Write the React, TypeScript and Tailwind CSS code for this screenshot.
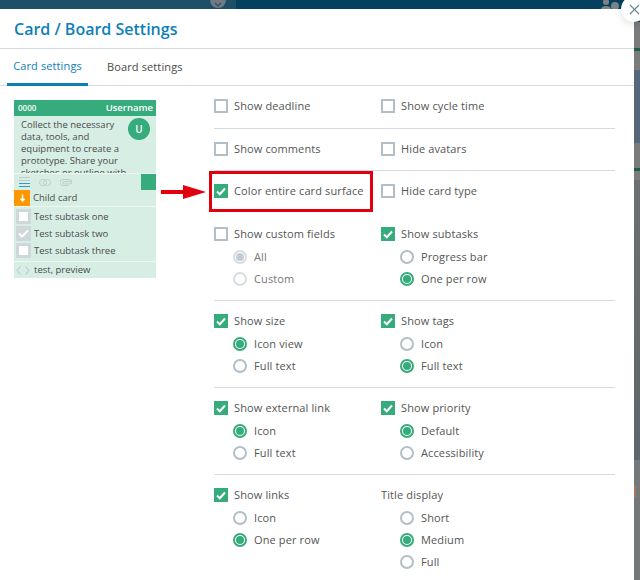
import React from "react";
import { X } from "lucide-react";

function Check({ on }: { on?: boolean }) {
  return on ? (
    <span className="flex h-[14px] w-[14px] shrink-0 items-center justify-center bg-[#36ab7b]">
      <svg width="10" height="9" viewBox="0 0 10 9" fill="none">
        <path d="M1 4.5 L3.8 7.2 L9 1.5" stroke="#fff" strokeWidth="2" />
      </svg>
    </span>
  ) : (
    <span className="h-[14px] w-[14px] shrink-0 border-2 border-[#b2bfc8] bg-white" />
  );
}

function CheckRow({ label, on }: { label: string; on?: boolean }) {
  return (
    <div className="flex h-4 items-center gap-[6px]">
      <Check on={on} />
      <span>{label}</span>
    </div>
  );
}

function Radio({ label, on, dim }: { label: string; on?: boolean; dim?: boolean }) {
  const ring = on ? "border-[#36ab7b]" : dim ? "border-[#d5dde2]" : "border-[#b2bfc8]";
  return (
    <div className={`flex h-4 items-center gap-[7px] pl-[19px] ${dim ? "text-[#777]" : ""}`}>
      <span className={`flex h-[14px] w-[14px] shrink-0 items-center justify-center rounded-full border-2 bg-white ${ring}`}>
        {on && <span className="h-2 w-2 rounded-full bg-[#36ab7b]" />}
      </span>
      <span>{label}</span>
    </div>
  );
}

function DimSelected({ label }: { label: string }) {
  return (
    <div className="flex h-4 items-center gap-[7px] pl-[19px] text-[#777]">
      <span className="flex h-[14px] w-[14px] shrink-0 items-center justify-center rounded-full border-2 border-[#d5dde2] bg-white">
        <span className="h-2 w-2 rounded-full bg-[#c3ccd2]" />
      </span>
      <span>{label}</span>
    </div>
  );
}

function Section({ children, line = true, tall = false }: { children: React.ReactNode; line?: boolean; tall?: boolean }) {
  return (
    <div className={`grid grid-cols-[167px_1fr] border-b pt-3 ${tall ? "pb-[14px]" : "pb-[13px]"} ${line ? "border-[#d3dbe1]" : "border-transparent"}`}>
      {children}
    </div>
  );
}

function Subs({ children }: { children: React.ReactNode }) {
  return <div className="mt-[7px] flex flex-col gap-[6px]">{children}</div>;
}

function Subtask({ label, on }: { label: string; on?: boolean }) {
  return (
    <div className="flex h-[17px] items-center gap-[3px] pl-[2px]">
      <span className={`flex h-[15px] w-[15px] items-center justify-center border-[3px] ${on ? "border-[#ced7da] bg-[#ced7da]" : "border-[#ced7da] bg-white"}`}>
        {on && (
          <svg width="11" height="9" viewBox="0 0 11 9" fill="none" className="shrink-0">
            <path d="M1 4.5 L4 7.5 L10 1.5" stroke="#fff" strokeWidth="2" />
          </svg>
        )}
      </span>
      <span>{label}</span>
    </div>
  );
}

function Card() {
  return (
    <div className="flex h-[178px] w-[142px] flex-col bg-[#d7eee5] text-[9.5px] leading-[12px] tracking-normal text-[#4a4a4a]">
      <div className="flex h-4 items-center justify-between bg-[#36ab7b] pl-1 pr-[3px] font-semibold text-white">
        <span className="text-[8px]">0000</span>
        <span className="text-[9.5px]">Username</span>
      </div>
      <div className="h-[57px] overflow-hidden pl-[7px] pr-[6px] pt-[3px]">
        <span className="float-right ml-[6px] mt-[-1px] flex h-[22px] w-[22px] items-center justify-center rounded-full bg-[#36ab7b] text-[10px] font-semibold text-white">U</span>
        Collect the necessary data, tools, and equipment to create a prototype. Share your sketches or outline with
      </div>
      <div className="flex h-[17px] items-center border-t border-[#eef7f3] pl-[5px]">
        <span className="flex w-[11px] flex-col gap-[2px]">
          <span className="h-px bg-[#c2ccd0]" />
          <span className="h-px bg-[#c2ccd0]" />
          <span className="h-px bg-[#2f9bd1]" />
          <span className="h-px bg-[#2f9bd1]" />
        </span>
        <svg className="ml-[9px]" width="12" height="7" viewBox="0 0 12 7" fill="none" stroke="#bfcdcd" strokeWidth="1">
          <rect x="0.5" y="0.5" width="7" height="6" rx="3" />
          <rect x="4.5" y="0.5" width="7" height="6" rx="3" />
        </svg>
        <svg className="ml-[9px]" width="12" height="7" viewBox="0 0 12 7" fill="none" stroke="#bfcdcd" strokeWidth="1">
          <path d="M11.5 2.5 H4 a1.2 1.2 0 0 0 0 2.5 H9.5 a1.9 1.9 0 0 0 0-4.5 H3 a2.6 2.6 0 0 0 0 6 H8" />
        </svg>
        <span className="ml-auto h-4 w-[15px] bg-[#36ab7b]" />
      </div>
      <div className="flex h-[17px] items-start gap-[3px] border-b border-[#eef7f3]">
        <span className="flex h-4 w-4 items-center justify-center bg-[#ff9800]">
          <svg width="7" height="8" viewBox="0 0 7 8" fill="none">
            <path d="M3.5 0.5 V6 M1.5 4.8 L3.5 7 L5.5 4.8" stroke="#fff" strokeWidth="1.5" />
          </svg>
        </span>
        <span className="leading-[15px]">Child card</span>
      </div>
      <div className="flex flex-col pt-[1px]">
        <Subtask label="Test subtask one" />
        <Subtask label="Test subtask two" on />
        <Subtask label="Test subtask three" />
      </div>
      <div className="mt-[2px] flex h-[17px] items-center gap-[3px] border-t border-[#eef7f3] pl-[2px]">
        <svg width="14" height="9" viewBox="0 0 14 9" fill="none" stroke="#b5c2c6" strokeWidth="1">
          <path d="M4.5 0.5 L1 4.5 L4.5 8.5 M9.5 0.5 L13 4.5 L9.5 8.5" />
        </svg>
        <span className="ml-[1px]">test, preview</span>
      </div>
    </div>
  );
}

function BackdropStrip() {
  return (
    <div className="flex flex-1 flex-col bg-[#75787a]">
      <div className="h-[13px] shrink-0 bg-[#06405f]" />
      <div className="h-[26px] shrink-0 bg-[#7a7b7b]" />
      <div className="h-[3px] shrink-0 bg-[#1f5f45]" />
      <div className="h-[19px] shrink-0 bg-[#7a7b7b]" />
      <div className="h-[73px] shrink-0 bg-[#55677a]" />
      <div className="h-[25px] shrink-0 bg-[#7a7b7b]" />
      <div className="h-[3px] shrink-0 bg-[#1f5f45]" />
      <div className="h-[9px] shrink-0 bg-[#7a7b7b]" />
      <div className="h-[280px] shrink-0 bg-gradient-to-b from-[#6b7072] to-[#5f666b]" />
      <div className="h-[25px] shrink-0 bg-[#75787a]" />
      <div className="h-[12px] w-[2px] shrink-0 bg-[#a8765a]" />
    </div>
  );
}

export default function App() {
  return (
    <div className="relative h-[580px] w-[640px] overflow-hidden bg-[#6c7476] font-['Open_Sans',sans-serif] text-[11px] tracking-[0.12px] text-[#555]">
      <div className="relative flex h-[9px] bg-[#06405f]">
        <div className="h-[9px] w-[236px] bg-[#1d4f66]" />
        <span className="absolute left-[210px] top-[-8px] flex h-4 w-4 items-end justify-center rounded-full bg-[#6e7b84]">
          <svg width="8" height="5" viewBox="0 0 8 5" fill="none" className="mb-[1px]">
            <path d="M1 1 L4 4 L7 1" stroke="#3d4a55" strokeWidth="1.2" />
          </svg>
        </span>
        <svg className="absolute left-[600px] top-0" width="20" height="9" viewBox="0 0 20 9">
          <circle cx="6" cy="2" r="3" fill="#7c8386" />
          <path d="M1 9 C1 5 11 5 11 9 Z" fill="#7c8386" />
          <circle cx="15" cy="6" r="4" fill="#7c8386" />
        </svg>
      </div>
      <div className="flex h-[571px]">
        <div className="flex w-[634px] flex-col bg-white">
          <div className="flex h-[40px] items-center border-b border-[#d3dbe1] pl-[14px] text-[16px] font-semibold tracking-normal text-[#0e7fb8]">
            Card / Board Settings
          </div>
          <div className="flex h-[37px] gap-[19px] border-b border-[#d3dbe1] pl-[7px]">
            <div className="-mb-px flex w-[81px] items-center justify-center border-b-[3px] border-[#0e7fb8] text-[#0e7fb8]">Card settings</div>
            <div className="flex items-center text-[#4a4a4a]">Board settings</div>
          </div>
          <div className="flex">
            <div className="w-[214px] pl-[14px] pt-[14px]">
              <Card />
            </div>
            <div className="w-[401px]">
              <Section tall>
                <CheckRow label="Show deadline" />
                <CheckRow label="Show cycle time" />
              </Section>
              <Section>
                <CheckRow label="Show comments" />
                <CheckRow label="Hide avatars" />
              </Section>
              <Section line={false} tall>
                <CheckRow label="Color entire card surface" on />
                <CheckRow label="Hide card type" />
              </Section>
              <Section>
                <div>
                  <CheckRow label="Show custom fields" />
                  <Subs>
                    <DimSelected label="All" />
                    <Radio label="Custom" dim />
                  </Subs>
                </div>
                <div>
                  <CheckRow label="Show subtasks" on />
                  <Subs>
                    <Radio label="Progress bar" />
                    <Radio label="One per row" on />
                  </Subs>
                </div>
              </Section>
              <Section>
                <div>
                  <CheckRow label="Show size" on />
                  <Subs>
                    <Radio label="Icon view" on />
                    <Radio label="Full text" />
                  </Subs>
                </div>
                <div>
                  <CheckRow label="Show tags" on />
                  <Subs>
                    <Radio label="Icon" />
                    <Radio label="Full text" on />
                  </Subs>
                </div>
              </Section>
              <Section>
                <div>
                  <CheckRow label="Show external link" on />
                  <Subs>
                    <Radio label="Icon" on />
                    <Radio label="Full text" />
                  </Subs>
                </div>
                <div>
                  <CheckRow label="Show priority" on />
                  <Subs>
                    <Radio label="Default" on />
                    <Radio label="Accessibility" />
                  </Subs>
                </div>
              </Section>
              <div className="grid grid-cols-[167px_1fr] pt-3">
                <div>
                  <CheckRow label="Show links" on />
                  <Subs>
                    <Radio label="Icon" />
                    <Radio label="One per row" on />
                  </Subs>
                </div>
                <div>
                  <div className="flex h-4 items-center">Title display</div>
                  <Subs>
                    <Radio label="Short" />
                    <Radio label="Medium" on />
                    <Radio label="Full" />
                  </Subs>
                </div>
              </div>
            </div>
          </div>
        </div>
        <BackdropStrip />
      </div>

      <div className="absolute left-[621px] top-[-4px] flex h-[26px] w-[26px] items-center justify-center rounded-full bg-white shadow-[0_2px_8px_rgba(0,0,0,0.12)]">
        <X size={17} strokeWidth={1.6} className="text-[#6b8596]" />
      </div>
      <div className="absolute left-[209px] top-[171px] h-[41px] w-[164px] border-[3px] border-[#e2000f]" />
      <svg className="absolute left-[160px] top-[184px]" width="48" height="16" viewBox="0 0 48 16">
        <path d="M1 6 H23 V1 L46 8 L23 15 V10 H1 Z" fill="#e2000f" />
      </svg>
    </div>
  );
}
